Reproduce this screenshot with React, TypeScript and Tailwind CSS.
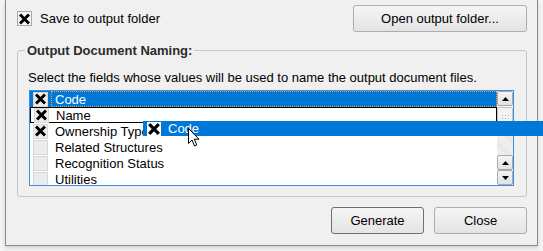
import React from "react";

const XMark = ({ size = 14 }: { size?: number }) => (
  <svg width={size} height={size} viewBox="0 0 14 14">
    <path d="M2.2 2.2 L11.8 11.8 M11.8 2.2 L2.2 11.8" stroke="#000" strokeWidth="3.2" />
  </svg>
);

const ListCheck = ({ checked }: { checked: boolean }) => (
  <div className="w-[15px] h-[15px] border border-[#d6d6d6] bg-[#ececec] flex items-center justify-center shrink-0">
    {checked && <XMark size={14} />}
  </div>
);

const rows = [
  { label: "Code", checked: true },
  { label: "Name", checked: true },
  { label: "Ownership Type", checked: true },
  { label: "Related Structures", checked: false },
  { label: "Recognition Status", checked: false },
  { label: "Utilities", checked: false },
];

const Arrow = ({ up }: { up: boolean }) => (
  <svg width="7" height="4" viewBox="0 0 7 4">
    <path d={up ? "M0 4 L3.5 0 L7 4 Z" : "M0 0 L3.5 4 L7 0 Z"} fill="#000" />
  </svg>
);

const ScrollBtn = ({ up }: { up: boolean }) => (
  <div className="h-[15px] w-full border border-[#a9a9a9] rounded-[2px] bg-gradient-to-b from-[#f4f4f4] to-[#e2e2e2] flex items-center justify-center">
    <Arrow up={up} />
  </div>
);

const Cursor = () => (
  <svg width="13" height="20" viewBox="0 0 13 20">
    <path
      d="M0.5 0.5 L0.5 15.5 L4 12 L6.5 18 L8.8 17 L6.3 11.2 L11 11.2 Z"
      fill="#fff"
      stroke="#000"
      strokeWidth="1"
      strokeLinejoin="miter"
    />
  </svg>
);

export default function App() {
  return (
    <div className="relative w-[543px] h-[251px] overflow-hidden bg-[#f4f4f4] text-[13px] text-black font-['Liberation_Sans',Arial,sans-serif] leading-[15px]">
      <div className="ml-[5px] w-[533px] h-[246px] bg-[#f0f0f0] border-x border-b border-[#8a8a8a] shadow-[0_2px_4px_rgba(0,0,0,0.15)] flex flex-col">
        {/* top row */}
        <div className="mt-[5px] h-[27px] pl-[11px] pr-[10px] flex items-center justify-between">
          <div className="flex items-center">
            <div className="w-[15px] h-[15px] border border-[#a8a8a8] bg-[#f7f7f7] flex items-center justify-center">
              <XMark size={14} />
            </div>
            <span className="ml-[8px]">Save to output folder</span>
          </div>
          <button className="w-[174px] h-[27px] border border-[#adadad] rounded-[3px] bg-gradient-to-b from-[#f5f5f5] to-[#e4e4e4] text-[13px]">
            Open output folder...
          </button>
        </div>

        {/* group box */}
        <fieldset className="mt-[11px] ml-[11px] w-[510px] border border-[#c6c6c6] rounded-[3px] pl-[10px] pr-[11px] pb-[10px]">
          <legend className="-ml-[3px] px-[2px] font-bold text-[#2b2b2b]">Output Document Naming:</legend>
          <div className="mt-[12px]">Select the fields whose values will be used to name the output document files.</div>
          <div className="mt-[5px] ml-[1px] w-[485px] h-[96px] border border-[#3c8fe0] bg-white flex">
            <div className="flex-1 overflow-hidden">
              {rows.map((r, i) => {
                const selected = i === 0;
                const drop = i === 1;
                return (
                  <div
                    key={r.label}
                    className={
                      "h-[16px] flex items-center pl-[3px] " +
                      (selected ? "bg-[#0078d7] text-white " : "") +
                      (drop ? "border border-black pl-[2px] " : "")
                    }
                  >
                    <ListCheck checked={r.checked} />
                    {selected ? (
                      <div className="ml-[3px] flex-1 h-[16px] border border-dotted border-[#f0a040] pl-[3px] flex items-center">
                        {r.label}
                      </div>
                    ) : (
                      <span className="ml-[7px]">{r.label}</span>
                    )}
                  </div>
                );
              })}
            </div>
            <div className="w-[16px] flex flex-col bg-[#f7f7f7]">
              <ScrollBtn up />
              <div className="mt-[1px] h-[22px] border border-[#c4c4c4] rounded-[2px] bg-[#f2f2f2] flex items-center justify-center">
                <div className="w-[8px] h-[8px] bg-[radial-gradient(#b8b8b8_1px,transparent_1px)] bg-[length:3px_3px]" />
              </div>
              <div className="flex-1 bg-[repeating-linear-gradient(45deg,#f4f4f4_0px,#f4f4f4_1px,#e4e4e4_1px,#e4e4e4_2px)]" />
              <ScrollBtn up />
              <ScrollBtn up={false} />
            </div>
          </div>
        </fieldset>

        {/* bottom buttons */}
        <div className="mt-[10px] pr-[10px] flex justify-end gap-[10px]">
          <button className="w-[93px] h-[27px] border border-[#707070] rounded-[3px] bg-gradient-to-b from-[#f5f5f5] to-[#e4e4e4] text-[13px]">
            Generate
          </button>
          <button className="w-[93px] h-[27px] border border-[#adadad] rounded-[3px] bg-gradient-to-b from-[#f5f5f5] to-[#e4e4e4] text-[13px]">
            Close
          </button>
        </div>
      </div>

      {/* drag ghost */}
      <div className="absolute left-[143px] top-[121px] w-[410px] h-[15px] bg-[#0078d7] flex items-center text-white">
        <div className="ml-[4px] w-[14px] h-[14px] bg-white flex items-center justify-center">
          <XMark size={14} />
        </div>
        <span className="ml-[7px]">Code</span>
      </div>
      <div className="absolute left-[188px] top-[128px]">
        <Cursor />
      </div>
    </div>
  );
}
